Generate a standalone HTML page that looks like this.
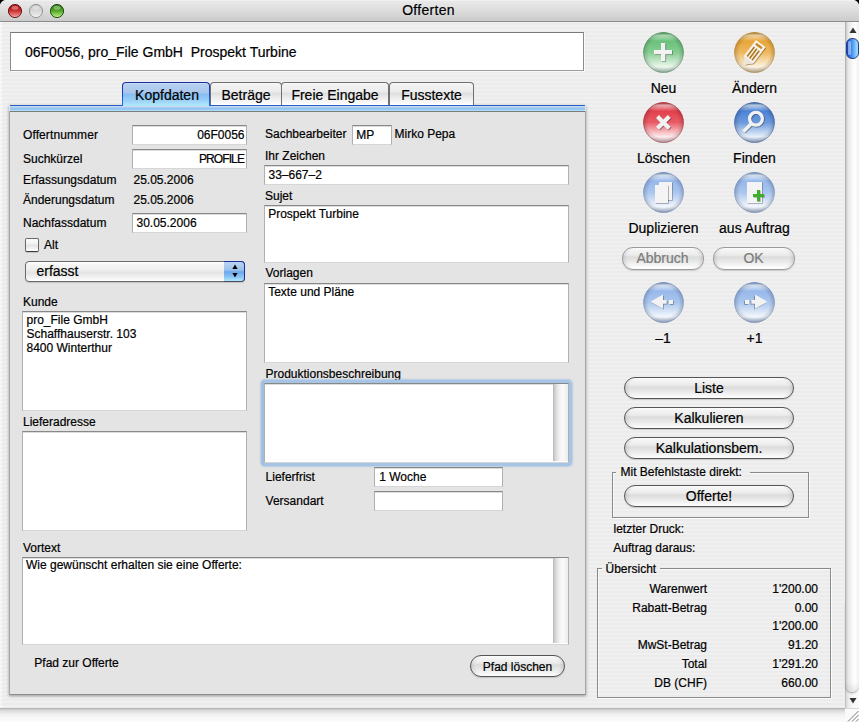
<!DOCTYPE html><html><head><meta charset="utf-8"><title>Offerten</title><style>
*{margin:0;padding:0;box-sizing:content-box}
html,body{width:859px;height:722px;overflow:hidden;background:#ececec}
body{position:relative;font-family:"Liberation Sans",sans-serif;color:#000}
.t{position:absolute;white-space:pre;-webkit-text-stroke:0.2px currentColor}
.fld{position:absolute;background:#fff;border:1px solid #b0b0b0;border-top-color:#888888;border-bottom-color:#d6d6d6;box-shadow:inset 0 1px 0 #dcdcdc}
.btn{position:absolute;border:1px solid #555;border-radius:11px;
 background:linear-gradient(#ffffff 0px,#f4f4f4 2px,#ececec 7px,#dcdcdc 9px,#e4e4e4 12px,#f4f4f4 17px,#ffffff 20px);
 box-shadow:0 1px 1px rgba(0,0,0,.15), inset 4px 0 4px -3px rgba(0,0,0,.14), inset -4px 0 4px -3px rgba(0,0,0,.14)}
.btn.dis{border-color:#9a9a9a}
</style></head><body>
<div style="position:absolute;left:0px;top:0px;width:859px;height:21px;background:linear-gradient(#f8f8f8 0,#e9e9e9 1px,#dedede 10px,#cbcbcb 21px)"></div>
<div style="position:absolute;left:0px;top:21px;width:859px;height:1px;background:#8c8c8c"></div>
<div class="t" style="left:228.5px;width:400px;top:3.15px;font-size:14px;line-height:14px;color:#000;text-align:center;letter-spacing:0.3px">Offerten</div>
<svg style="position:absolute;left:8px;top:4px" width="14" height="14" viewBox="0 0 14 14"><defs><linearGradient id="lg15" x1="0" y1="0" x2="0" y2="1"><stop offset="0" stop-color="#a80c0c"/><stop offset="0.45" stop-color="#c82a2a"/><stop offset="1" stop-color="#f6a8a8"/></linearGradient></defs><circle cx="7" cy="7" r="6.6" fill="url(#lg15)" stroke="#5a1010" stroke-width="0.9"/><ellipse cx="7" cy="3.8" rx="3.4" ry="2" fill="#fff" opacity="0.35"/></svg>
<svg style="position:absolute;left:29px;top:4px" width="14" height="14" viewBox="0 0 14 14"><defs><linearGradient id="lg36" x1="0" y1="0" x2="0" y2="1"><stop offset="0" stop-color="#c4c4c4"/><stop offset="0.45" stop-color="#d4d4d4"/><stop offset="1" stop-color="#f2f2f2"/></linearGradient></defs><circle cx="7" cy="7" r="6.6" fill="url(#lg36)" stroke="#8c8c8c" stroke-width="0.9"/><ellipse cx="7" cy="3.8" rx="3.4" ry="2" fill="#fff" opacity="0.35"/></svg>
<svg style="position:absolute;left:50px;top:4px" width="14" height="14" viewBox="0 0 14 14"><defs><linearGradient id="lg57" x1="0" y1="0" x2="0" y2="1"><stop offset="0" stop-color="#2a7a0c"/><stop offset="0.45" stop-color="#4aa020"/><stop offset="1" stop-color="#c0f488"/></linearGradient></defs><circle cx="7" cy="7" r="6.6" fill="url(#lg57)" stroke="#183c0c" stroke-width="0.9"/><ellipse cx="7" cy="3.8" rx="3.4" ry="2" fill="#fff" opacity="0.35"/></svg>
<div style="position:absolute;left:0px;top:22px;width:845px;height:686px;background:repeating-linear-gradient(#f0f0f0 0px,#f0f0f0 1px,#ebebeb 1px,#ebebeb 2px,#ececec 2px,#ececec 3px,#f0f0f0 3px,#f0f0f0 4px) 0 22px / 100% 4px fixed"></div>
<div style="position:absolute;left:0px;top:22px;width:2px;height:686px;background:repeating-linear-gradient(#ffffff 0px,#ffffff 1px,#f2f2f2 1px,#f2f2f2 4px)"></div>
<div style="position:absolute;left:10px;top:32px;width:572px;height:37px;background:#fff;border:1px solid #8c8c8c;border-top-color:#7a7a7a;border-bottom-color:#9c9c9c;box-shadow:1px 1px 0 rgba(255,255,255,.7)"></div>
<div class="t" style="left:25px;top:45.15px;font-size:14px;line-height:14px;color:#000;">06F0056, pro_File GmbH  Prospekt Turbine</div>
<div style="position:absolute;left:9px;top:105px;width:577px;height:590px;background:#e4e4e4;box-shadow:0 1px 3px rgba(0,0,0,.35)"></div>
<div style="position:absolute;left:9px;top:111px;width:1px;height:584px;background:#a6a6a6"></div>
<div style="position:absolute;left:585px;top:111px;width:1px;height:584px;background:#a6a6a6"></div>
<div style="position:absolute;left:9px;top:694px;width:577px;height:1px;background:#8e8e8e"></div>
<div style="position:absolute;left:10px;top:111px;width:575px;height:1px;background:#7c7c7c"></div>
<div style="position:absolute;left:10px;top:105px;width:575px;height:6px;background:linear-gradient(#2a5fc4 0,#2a5fc4 1px,#c9dcf3 1px,#bcd4f1 2px,#9cc4ef 3px,#8ec2f2 4px,#b6e6fc 6px)"></div>
<div style="position:absolute;left:210px;top:82px;width:70px;height:22px;border:1px solid #707070;border-bottom:none;border-radius:4px 4px 0 0;background:linear-gradient(#fafafa 0,#f2f2f2 2px,#ececec 9px,#dedede 10px,#f0f0f0 16px,#ffffff 22px)"></div>
<div class="t" style="left:46.0px;width:400px;top:88.15px;font-size:14px;line-height:14px;color:#000;text-align:center;">Beträge</div>
<div style="position:absolute;left:281px;top:82px;width:106px;height:22px;border:1px solid #707070;border-bottom:none;border-radius:4px 4px 0 0;background:linear-gradient(#fafafa 0,#f2f2f2 2px,#ececec 9px,#dedede 10px,#f0f0f0 16px,#ffffff 22px)"></div>
<div class="t" style="left:135.0px;width:400px;top:88.15px;font-size:14px;line-height:14px;color:#000;text-align:center;">Freie Eingabe</div>
<div style="position:absolute;left:389px;top:82px;width:83px;height:22px;border:1px solid #707070;border-bottom:none;border-radius:4px 4px 0 0;background:linear-gradient(#fafafa 0,#f2f2f2 2px,#ececec 9px,#dedede 10px,#f0f0f0 16px,#ffffff 22px)"></div>
<div class="t" style="left:231.5px;width:400px;top:88.15px;font-size:14px;line-height:14px;color:#000;text-align:center;">Fusstexte</div>
<div style="position:absolute;left:122px;top:82px;width:88px;height:23px;border-radius:4px 4px 0 0;background:linear-gradient(#1c2c9c 0,#1c3cb8 40%,#1a5ee0 80%,#1c78f4 100%)"></div>
<div style="position:absolute;left:123px;top:83px;width:86px;height:23px;border-radius:3px 3px 0 0;background:linear-gradient(#d8e8f8 0,#b6d0f0 1px,#a8c6ec 10px,#86bcf2 11px,#98cef6 17px,#b4eafc 23px)"></div>
<div class="t" style="left:-33.0px;width:400px;top:88.15px;font-size:14px;line-height:14px;color:#000;text-align:center;">Kopfdaten</div>
<div class="t" style="left:23px;top:128.84px;font-size:12px;line-height:12px;color:#000;letter-spacing:0.1px">Offertnummer</div>
<div class="fld" style="left:132px;top:125px;width:113px;height:18px"></div>
<div class="t" style="right:614.5px;top:128.84px;font-size:12px;line-height:12px;color:#000;text-align:right;">06F0056</div>
<div class="t" style="left:23px;top:152.84px;font-size:12px;line-height:12px;color:#000;">Suchkürzel</div>
<div class="fld" style="left:132px;top:149px;width:113px;height:18px"></div>
<div class="t" style="right:615px;top:152.84px;font-size:12px;line-height:12px;color:#000;text-align:right;letter-spacing:-0.9px">PROFILE</div>
<div class="t" style="left:23px;top:173.84px;font-size:12px;line-height:12px;color:#000;">Erfassungsdatum</div>
<div class="t" style="left:133.5px;top:173.84px;font-size:12px;line-height:12px;color:#000;">25.05.2006</div>
<div class="t" style="left:23px;top:193.84px;font-size:12px;line-height:12px;color:#000;">Änderungsdatum</div>
<div class="t" style="left:133.5px;top:193.84px;font-size:12px;line-height:12px;color:#000;">25.05.2006</div>
<div class="t" style="left:23px;top:216.84px;font-size:12px;line-height:12px;color:#000;">Nachfassdatum</div>
<div class="fld" style="left:132px;top:213px;width:113px;height:18px"></div>
<div class="t" style="left:136.5px;top:216.84px;font-size:12px;line-height:12px;color:#000;">30.05.2006</div>
<div style="position:absolute;left:25px;top:238px;width:12px;height:12px;border:1px solid #6a6a6a;border-bottom-color:#3a3a3a;border-radius:2px;background:linear-gradient(#fdfdfd,#f0f0f0 45%,#e2e2e2 50%,#f6f6f6 85%,#ffffff);box-shadow:0 1px 1px rgba(0,0,0,.15)"></div>
<div class="t" style="left:44px;top:238.84px;font-size:12px;line-height:12px;color:#000;">Alt</div>
<div style="position:absolute;left:25px;top:261px;width:218px;height:19px;border:1px solid #6a6a6a;border-radius:4px;background:linear-gradient(#ffffff 0,#f4f4f4 3px,#ececec 9px,#e2e2e2 10px,#f0f0f0 15px,#ffffff 19px);box-shadow:0 1px 1px rgba(0,0,0,.15)"></div>
<div style="position:absolute;left:224px;top:261px;width:20px;height:19px;border:1px solid #1a2f9c;border-bottom-color:#4a4a60;border-left:none;border-radius:0 4px 4px 0;background:linear-gradient(#bcd4f2 0,#9cc0ec 8px,#6aa8ee 10px,#8cc4f4 15px,#b0eafc 19px)"></div>
<svg style="position:absolute;left:232px;top:264px" width="6" height="14" viewBox="0 0 6 14"><path d="M3 0.6 L5.6 5 L0.4 5 Z" fill="#000"/><path d="M0.4 9 L5.6 9 L3 13.4 Z" fill="#000"/></svg>
<div class="t" style="left:36.5px;top:264.15px;font-size:14px;line-height:14px;color:#000;">erfasst</div>
<div class="t" style="left:23px;top:295.84px;font-size:12px;line-height:12px;color:#000;">Kunde</div>
<div class="fld" style="left:22px;top:311px;width:223px;height:98px"></div>
<div class="t" style="left:26.5px;top:313.84px;font-size:12px;line-height:12px;color:#000;">pro_File GmbH</div>
<div class="t" style="left:26.5px;top:327.84px;font-size:12px;line-height:12px;color:#000;">Schaffhauserstr. 103</div>
<div class="t" style="left:26.5px;top:341.84px;font-size:12px;line-height:12px;color:#000;">8400 Winterthur</div>
<div class="t" style="left:23px;top:415.84px;font-size:12px;line-height:12px;color:#000;">Lieferadresse</div>
<div class="fld" style="left:22px;top:431px;width:223px;height:98px"></div>
<div class="t" style="left:23px;top:541.84px;font-size:12px;line-height:12px;color:#000;">Vortext</div>
<div class="fld" style="left:22px;top:557px;width:545px;height:86px"></div>
<div style="position:absolute;left:553px;top:558px;width:15px;height:85px;background:linear-gradient(90deg,#b8b8b8 0,#dcdcdc 3px,#f4f4f4 7px,#fafafa 10px,#ececec 15px)"></div>
<div class="t" style="left:26px;top:558.84px;font-size:12px;line-height:12px;color:#000;">Wie gewünscht erhalten sie eine Offerte:</div>
<div class="t" style="left:34.3px;top:656.84px;font-size:12px;line-height:12px;color:#000;">Pfad zur Offerte</div>
<div class="btn" style="left:470px;top:655px;width:93px;height:20px"></div>
<div class="t" style="left:317.5px;width:400px;top:660.84px;font-size:12px;line-height:12px;color:#000;text-align:center;">Pfad löschen</div>
<div class="t" style="left:265px;top:127.84px;font-size:12px;line-height:12px;color:#000;">Sachbearbeiter</div>
<div class="fld" style="left:352px;top:125px;width:38px;height:18px"></div>
<div class="t" style="left:356.3px;top:128.84px;font-size:12px;line-height:12px;color:#000;">MP</div>
<div class="t" style="left:394.5px;top:127.84px;font-size:12px;line-height:12px;color:#000;">Mirko Pepa</div>
<div class="t" style="left:265px;top:149.84px;font-size:12px;line-height:12px;color:#000;">Ihr Zeichen</div>
<div class="fld" style="left:264px;top:165px;width:303px;height:18px"></div>
<div class="t" style="left:268.5px;top:168.84px;font-size:12px;line-height:12px;color:#000;">33–667–2</div>
<div class="t" style="left:265px;top:189.84px;font-size:12px;line-height:12px;color:#000;">Sujet</div>
<div class="fld" style="left:264px;top:205px;width:303px;height:56px"></div>
<div class="t" style="left:268.2px;top:207.84px;font-size:12px;line-height:12px;color:#000;">Prospekt Turbine</div>
<div class="t" style="left:265.5px;top:266.84px;font-size:12px;line-height:12px;color:#000;">Vorlagen</div>
<div class="fld" style="left:264px;top:283px;width:303px;height:78px"></div>
<div class="t" style="left:268.2px;top:285.84px;font-size:12px;line-height:12px;color:#000;">Texte und Pläne</div>
<div class="t" style="left:265.5px;top:367.84px;font-size:12px;line-height:12px;color:#000;">Produktionsbeschreibung</div>
<div style="position:absolute;left:261px;top:380px;width:311px;height:86px;border-radius:4px;box-shadow:0 0 1.5px 1px rgba(150,185,225,.55);background:linear-gradient(90deg,#b4cce6 0,#96bae0 1.5px,#a6c4e4 3px)"></div>
<div class="fld" style="left:264px;top:383px;width:303px;height:78px"></div>
<div style="position:absolute;left:553px;top:384px;width:15px;height:77px;background:linear-gradient(90deg,#b8b8b8 0,#dcdcdc 3px,#f4f4f4 7px,#fafafa 10px,#ececec 15px)"></div>
<div class="t" style="left:265.6px;top:470.84px;font-size:12px;line-height:12px;color:#000;">Lieferfrist</div>
<div class="fld" style="left:374px;top:467px;width:127px;height:18px"></div>
<div class="t" style="left:379.2px;top:470.84px;font-size:12px;line-height:12px;color:#000;">1 Woche</div>
<div class="t" style="left:265.6px;top:494.84px;font-size:12px;line-height:12px;color:#000;">Versandart</div>
<div class="fld" style="left:374px;top:491px;width:127px;height:18px"></div>
<svg style="position:absolute;left:643px;top:32px" width="41" height="41" viewBox="0 0 41 41"><defs><linearGradient id="ig1" x1="0" y1="0" x2="0" y2="1"><stop offset="0" stop-color="#3f9550"/><stop offset="0.07" stop-color="#b8e4bf"/><stop offset="0.22" stop-color="#6cc17c"/><stop offset="0.5" stop-color="#86cc92"/><stop offset="0.85" stop-color="#eaf8ec"/><stop offset="1" stop-color="#aec4bc"/></linearGradient><radialGradient id="ir1" cx="50%" cy="50%" r="50%"><stop offset="0.75" stop-color="#000" stop-opacity="0"/><stop offset="1" stop-color="#000" stop-opacity="0.18"/></radialGradient></defs><circle cx="20.5" cy="20.5" r="20.2" fill="url(#ig1)"/><circle cx="20.5" cy="20.5" r="20.2" fill="url(#ir1)"/><circle cx="20.5" cy="20.5" r="19.9" fill="none" stroke="#3f9550" stroke-opacity="0.55" stroke-width="0.8"/><g transform="translate(0.8,0.8)" opacity="0.35"><path d="M18 11 H22.3 V18 H29 V22.2 H22.3 V29.2 H18 V22.2 H11 V18 H18 Z" fill="#000"/></g><path d="M18 11 H22.3 V18 H29 V22.2 H22.3 V29.2 H18 V22.2 H11 V18 H18 Z" fill="#f2f2f2"/></svg>
<svg style="position:absolute;left:734px;top:32px" width="41" height="41" viewBox="0 0 41 41"><defs><linearGradient id="ig2" x1="0" y1="0" x2="0" y2="1"><stop offset="0" stop-color="#bf861e"/><stop offset="0.07" stop-color="#f6ddb0"/><stop offset="0.22" stop-color="#e8a63a"/><stop offset="0.5" stop-color="#eeb85e"/><stop offset="0.85" stop-color="#fdf3e0"/><stop offset="1" stop-color="#c8baa4"/></linearGradient><radialGradient id="ir2" cx="50%" cy="50%" r="50%"><stop offset="0.75" stop-color="#000" stop-opacity="0"/><stop offset="1" stop-color="#000" stop-opacity="0.18"/></radialGradient></defs><circle cx="20.5" cy="20.5" r="20.2" fill="url(#ig2)"/><circle cx="20.5" cy="20.5" r="20.2" fill="url(#ir2)"/><circle cx="20.5" cy="20.5" r="19.9" fill="none" stroke="#bf861e" stroke-opacity="0.55" stroke-width="0.8"/><g transform="translate(18.9,22) rotate(37)"><g transform="translate(1.1,0.5)" opacity="0.45"><path d="M-6 -13 H6 V7 L0 13.2 L-6 7 Z" fill="#5a3a08"/></g><path d="M-6 -13 H6 V7 L0 13.2 L-6 7 Z" fill="#f7f4ee"/><rect x="-3.9" y="-6.5" width="1.7" height="12" fill="#b27820"/><rect x="-0.85" y="-6.5" width="1.7" height="12" fill="#b27820"/><rect x="2.2" y="-6.5" width="1.7" height="12" fill="#b27820"/><rect x="-4" y="-11.2" width="8" height="2.4" rx="1" fill="#c88a2a"/><path d="M-6 7 H6 L0 13.2 Z" fill="#ebe5d8"/></g></svg>
<div class="t" style="left:463.5px;width:400px;top:81.15px;font-size:14px;line-height:14px;color:#000;text-align:center;">Neu</div>
<div class="t" style="left:554.5px;width:400px;top:81.15px;font-size:14px;line-height:14px;color:#000;text-align:center;">Ändern</div>
<svg style="position:absolute;left:643px;top:102px" width="41" height="41" viewBox="0 0 41 41"><defs><linearGradient id="ig3" x1="0" y1="0" x2="0" y2="1"><stop offset="0" stop-color="#b51c2a"/><stop offset="0.07" stop-color="#f4babe"/><stop offset="0.22" stop-color="#e2404c"/><stop offset="0.5" stop-color="#e85c66"/><stop offset="0.85" stop-color="#feeaec"/><stop offset="1" stop-color="#c8b0b8"/></linearGradient><radialGradient id="ir3" cx="50%" cy="50%" r="50%"><stop offset="0.75" stop-color="#000" stop-opacity="0"/><stop offset="1" stop-color="#000" stop-opacity="0.18"/></radialGradient></defs><circle cx="20.5" cy="20.5" r="20.2" fill="url(#ig3)"/><circle cx="20.5" cy="20.5" r="20.2" fill="url(#ir3)"/><circle cx="20.5" cy="20.5" r="19.9" fill="none" stroke="#b51c2a" stroke-opacity="0.55" stroke-width="0.8"/><g transform="translate(0.8,0.8)" opacity="0.35"><path d="M13 16 L16 13 L20.4 17.4 L24.8 13 L27.8 16 L23.4 20.4 L27.8 24.8 L24.8 27.8 L20.4 23.4 L16 27.8 L13 24.8 L17.4 20.4 Z" fill="#000"/></g><path d="M13 16 L16 13 L20.4 17.4 L24.8 13 L27.8 16 L23.4 20.4 L27.8 24.8 L24.8 27.8 L20.4 23.4 L16 27.8 L13 24.8 L17.4 20.4 Z" fill="#f2f2f2"/></svg>
<svg style="position:absolute;left:734px;top:102px" width="41" height="41" viewBox="0 0 41 41"><defs><linearGradient id="ig4" x1="0" y1="0" x2="0" y2="1"><stop offset="0" stop-color="#2a5aa8"/><stop offset="0.07" stop-color="#c8dbf3"/><stop offset="0.22" stop-color="#4c82d6"/><stop offset="0.5" stop-color="#6c9adc"/><stop offset="0.85" stop-color="#e6f0fb"/><stop offset="1" stop-color="#9aaac8"/></linearGradient><radialGradient id="ir4" cx="50%" cy="50%" r="50%"><stop offset="0.75" stop-color="#000" stop-opacity="0"/><stop offset="1" stop-color="#000" stop-opacity="0.18"/></radialGradient></defs><circle cx="20.5" cy="20.5" r="20.2" fill="url(#ig4)"/><circle cx="20.5" cy="20.5" r="20.2" fill="url(#ir4)"/><circle cx="20.5" cy="20.5" r="19.9" fill="none" stroke="#2a5aa8" stroke-opacity="0.55" stroke-width="0.8"/><g transform="translate(0.8,0.8)" opacity="0.35"><circle cx="22" cy="16.8" r="6.4" fill="none" stroke="#000" stroke-width="3.3"/><path d="M17.5 21.5 L9.5 29.5" stroke="#000" stroke-width="3.4" stroke-linecap="butt"/></g><circle cx="22" cy="16.8" r="6.4" fill="none" stroke="#f2f2f2" stroke-width="3.3"/><path d="M17.5 21.5 L9.5 29.5" stroke="#f2f2f2" stroke-width="3.4" stroke-linecap="butt"/></svg>
<div class="t" style="left:463.5px;width:400px;top:151.15px;font-size:14px;line-height:14px;color:#000;text-align:center;">Löschen</div>
<div class="t" style="left:554.5px;width:400px;top:151.15px;font-size:14px;line-height:14px;color:#000;text-align:center;">Finden</div>
<svg style="position:absolute;left:643px;top:172px" width="41" height="41" viewBox="0 0 41 41"><defs><linearGradient id="ig5" x1="0" y1="0" x2="0" y2="1"><stop offset="0" stop-color="#6a8cc8"/><stop offset="0.07" stop-color="#e4eefb"/><stop offset="0.22" stop-color="#98b8ea"/><stop offset="0.5" stop-color="#aac6ee"/><stop offset="0.85" stop-color="#f2f7fd"/><stop offset="1" stop-color="#a6b4d0"/></linearGradient><radialGradient id="ir5" cx="50%" cy="50%" r="50%"><stop offset="0.75" stop-color="#000" stop-opacity="0"/><stop offset="1" stop-color="#000" stop-opacity="0.18"/></radialGradient></defs><circle cx="20.5" cy="20.5" r="20.2" fill="url(#ig5)"/><circle cx="20.5" cy="20.5" r="20.2" fill="url(#ir5)"/><circle cx="20.5" cy="20.5" r="19.9" fill="none" stroke="#6a8cc8" stroke-opacity="0.55" stroke-width="0.8"/><rect x="16.8" y="10.8" width="13" height="18" fill="#000" opacity="0.3"/><rect x="16" y="10" width="13" height="18" fill="#f4f4f4"/><rect x="12.8" y="13.8" width="13" height="18" fill="#000" opacity="0.35"/><rect x="12" y="13" width="13" height="18" fill="#f4f4f4"/></svg>
<svg style="position:absolute;left:734px;top:172px" width="41" height="41" viewBox="0 0 41 41"><defs><linearGradient id="ig6" x1="0" y1="0" x2="0" y2="1"><stop offset="0" stop-color="#6a8cc8"/><stop offset="0.07" stop-color="#e4eefb"/><stop offset="0.22" stop-color="#98b8ea"/><stop offset="0.5" stop-color="#aac6ee"/><stop offset="0.85" stop-color="#f2f7fd"/><stop offset="1" stop-color="#a6b4d0"/></linearGradient><radialGradient id="ir6" cx="50%" cy="50%" r="50%"><stop offset="0.75" stop-color="#000" stop-opacity="0"/><stop offset="1" stop-color="#000" stop-opacity="0.18"/></radialGradient></defs><circle cx="20.5" cy="20.5" r="20.2" fill="url(#ig6)"/><circle cx="20.5" cy="20.5" r="20.2" fill="url(#ir6)"/><circle cx="20.5" cy="20.5" r="19.9" fill="none" stroke="#6a8cc8" stroke-opacity="0.55" stroke-width="0.8"/><rect x="13.8" y="10.8" width="15" height="21" fill="#000" opacity="0.3"/><rect x="13" y="10" width="15" height="21" fill="#f4f4f4"/><path d="M23 18 H26 V22 H30 V25.1 H26 V29.2 H23 V25.1 H19 V22 H23 Z" fill="#000" opacity="0.3" transform="translate(0.7,0.7)"/><path d="M23 18 H26 V22 H30 V25.1 H26 V29.2 H23 V25.1 H19 V22 H23 Z" fill="#3fae2e"/></svg>
<div class="t" style="left:463.5px;width:400px;top:221.15px;font-size:14px;line-height:14px;color:#000;text-align:center;">Duplizieren</div>
<div class="t" style="left:554.5px;width:400px;top:221.15px;font-size:14px;line-height:14px;color:#000;text-align:center;">aus Auftrag</div>
<div class="btn dis" style="left:622px;top:247px;width:80px;height:21px"></div>
<div class="btn dis" style="left:713px;top:247px;width:80px;height:21px"></div>
<div class="t" style="left:462.5px;width:400px;top:251.15px;font-size:14px;line-height:14px;color:#7c7c7c;text-align:center;">Abbruch</div>
<div class="t" style="left:553.5px;width:400px;top:251.15px;font-size:14px;line-height:14px;color:#7c7c7c;text-align:center;">OK</div>
<svg style="position:absolute;left:643px;top:282px" width="41" height="41" viewBox="0 0 41 41"><defs><linearGradient id="ig7" x1="0" y1="0" x2="0" y2="1"><stop offset="0" stop-color="#6a8cc8"/><stop offset="0.07" stop-color="#e4eefb"/><stop offset="0.22" stop-color="#98b8ea"/><stop offset="0.5" stop-color="#aac6ee"/><stop offset="0.85" stop-color="#f2f7fd"/><stop offset="1" stop-color="#a6b4d0"/></linearGradient><radialGradient id="ir7" cx="50%" cy="50%" r="50%"><stop offset="0.75" stop-color="#000" stop-opacity="0"/><stop offset="1" stop-color="#000" stop-opacity="0.18"/></radialGradient></defs><circle cx="20.5" cy="20.5" r="20.2" fill="url(#ig7)"/><circle cx="20.5" cy="20.5" r="20.2" fill="url(#ir7)"/><circle cx="20.5" cy="20.5" r="19.9" fill="none" stroke="#6a8cc8" stroke-opacity="0.55" stroke-width="0.8"/><g transform="translate(0.8,0.8)" opacity="0.35"><path d="M7.4 19.8 L20 12.6 L20 18 L23.7 18 L23.7 21.8 L20 21.8 L20 26.8 Z" fill="#000"/><rect x="26" y="18" width="4" height="4" fill="#000"/></g><path d="M7.4 19.8 L20 12.6 L20 18 L23.7 18 L23.7 21.8 L20 21.8 L20 26.8 Z" fill="#f2f2f2"/><rect x="26" y="18" width="4" height="4" fill="#f2f2f2"/></svg>
<svg style="position:absolute;left:734px;top:282px" width="41" height="41" viewBox="0 0 41 41"><defs><linearGradient id="ig8" x1="0" y1="0" x2="0" y2="1"><stop offset="0" stop-color="#6a8cc8"/><stop offset="0.07" stop-color="#e4eefb"/><stop offset="0.22" stop-color="#98b8ea"/><stop offset="0.5" stop-color="#aac6ee"/><stop offset="0.85" stop-color="#f2f7fd"/><stop offset="1" stop-color="#a6b4d0"/></linearGradient><radialGradient id="ir8" cx="50%" cy="50%" r="50%"><stop offset="0.75" stop-color="#000" stop-opacity="0"/><stop offset="1" stop-color="#000" stop-opacity="0.18"/></radialGradient></defs><circle cx="20.5" cy="20.5" r="20.2" fill="url(#ig8)"/><circle cx="20.5" cy="20.5" r="20.2" fill="url(#ir8)"/><circle cx="20.5" cy="20.5" r="19.9" fill="none" stroke="#6a8cc8" stroke-opacity="0.55" stroke-width="0.8"/><g transform="translate(41,0) scale(-1,1)"><g transform="translate(0.8,0.8)" opacity="0.35"><path d="M7.4 19.8 L20 12.6 L20 18 L23.7 18 L23.7 21.8 L20 21.8 L20 26.8 Z" fill="#000"/><rect x="26" y="18" width="4" height="4" fill="#000"/></g><path d="M7.4 19.8 L20 12.6 L20 18 L23.7 18 L23.7 21.8 L20 21.8 L20 26.8 Z" fill="#f2f2f2"/><rect x="26" y="18" width="4" height="4" fill="#f2f2f2"/></g></svg>
<div class="t" style="left:463px;width:400px;top:331.15px;font-size:14px;line-height:14px;color:#000;text-align:center;">–1</div>
<div class="t" style="left:554.5px;width:400px;top:331.15px;font-size:14px;line-height:14px;color:#000;text-align:center;">+1</div>
<div class="btn" style="left:624px;top:377px;width:168px;height:20px"></div>
<div class="t" style="left:509px;width:400px;top:381.15px;font-size:14px;line-height:14px;color:#000;text-align:center;">Liste</div>
<div class="btn" style="left:624px;top:407px;width:168px;height:20px"></div>
<div class="t" style="left:509px;width:400px;top:411.15px;font-size:14px;line-height:14px;color:#000;text-align:center;">Kalkulieren</div>
<div class="btn" style="left:624px;top:437px;width:168px;height:20px"></div>
<div class="t" style="left:509px;width:400px;top:441.15px;font-size:14px;line-height:14px;color:#000;text-align:center;">Kalkulationsbem.</div>
<div style="position:absolute;left:612px;top:472px;width:195px;height:44px;border:1px solid #8a8a8a;box-shadow:1px 1px 0 rgba(255,255,255,.8), inset 1px 1px 0 rgba(255,255,255,.6)"></div>
<div style="position:absolute;left:616px;top:468px;width:134px;height:8px;background:repeating-linear-gradient(#f0f0f0 0px,#f0f0f0 1px,#ebebeb 1px,#ebebeb 2px,#ececec 2px,#ececec 3px,#f0f0f0 3px,#f0f0f0 4px) 0 22px / 100% 4px fixed"></div>
<div class="t" style="left:620.5px;top:465.84px;font-size:12px;line-height:12px;color:#000;">Mit Befehlstaste direkt:</div>
<div class="btn" style="left:624px;top:485px;width:168px;height:20px"></div>
<div class="t" style="left:509px;width:400px;top:489.15px;font-size:14px;line-height:14px;color:#000;text-align:center;">Offerte!</div>
<div class="t" style="left:613.5px;top:522.84px;font-size:12px;line-height:12px;color:#000;">letzter Druck:</div>
<div class="t" style="left:613.3px;top:541.84px;font-size:12px;line-height:12px;color:#000;">Auftrag daraus:</div>
<div style="position:absolute;left:597px;top:568px;width:232px;height:128px;border:1px solid #8a8a8a;box-shadow:1px 1px 0 rgba(255,255,255,.8), inset 1px 1px 0 rgba(255,255,255,.6)"></div>
<div style="position:absolute;left:602px;top:564px;width:58px;height:8px;background:repeating-linear-gradient(#f0f0f0 0px,#f0f0f0 1px,#ebebeb 1px,#ebebeb 2px,#ececec 2px,#ececec 3px,#f0f0f0 3px,#f0f0f0 4px) 0 22px / 100% 4px fixed"></div>
<div class="t" style="left:605.5px;top:562.84px;font-size:12px;line-height:12px;color:#000;">Übersicht</div>
<div class="t" style="right:152px;top:582.84px;font-size:12px;line-height:12px;color:#000;text-align:right;">Warenwert</div>
<div class="t" style="right:41px;top:582.84px;font-size:12px;line-height:12px;color:#000;text-align:right;">1'200.00</div>
<div class="t" style="right:152px;top:601.84px;font-size:12px;line-height:12px;color:#000;text-align:right;">Rabatt-Betrag</div>
<div class="t" style="right:41px;top:601.84px;font-size:12px;line-height:12px;color:#000;text-align:right;">0.00</div>
<div class="t" style="right:41px;top:619.84px;font-size:12px;line-height:12px;color:#000;text-align:right;">1'200.00</div>
<div class="t" style="right:152px;top:638.84px;font-size:12px;line-height:12px;color:#000;text-align:right;">MwSt-Betrag</div>
<div class="t" style="right:41px;top:638.84px;font-size:12px;line-height:12px;color:#000;text-align:right;">91.20</div>
<div class="t" style="right:152px;top:657.84px;font-size:12px;line-height:12px;color:#000;text-align:right;">Total</div>
<div class="t" style="right:41px;top:657.84px;font-size:12px;line-height:12px;color:#000;text-align:right;">1'291.20</div>
<div class="t" style="right:152px;top:676.84px;font-size:12px;line-height:12px;color:#000;text-align:right;">DB (CHF)</div>
<div class="t" style="right:41px;top:676.84px;font-size:12px;line-height:12px;color:#000;text-align:right;">660.00</div>
<div style="position:absolute;left:845px;top:22px;width:14px;height:686px;background:linear-gradient(90deg,#9c9c9c 0,#c8c8c8 1px,#e6e6e6 3px,#f6f6f6 7px,#ffffff 10px,#f0f0f0 14px)"></div>
<svg style="position:absolute;left:849px;top:27px" width="8" height="7" viewBox="0 0 8 7"><path d="M4 0.5 L7.5 6 L0.5 6 Z" fill="#333"/></svg>
<div style="position:absolute;left:846px;top:38px;width:11px;height:19px;border:1px solid #2a3f7a;border-radius:6px;background:linear-gradient(90deg,#0c3cc4 0,#2466e0 2px,#4a92ee 5px,#88ccff 9px,#a0dcff 11px)"></div>
<div style="position:absolute;left:848px;top:41px;width:3px;height:14px;border-radius:2px;background:rgba(255,255,255,.45)"></div>
<div style="position:absolute;left:845px;top:688px;width:14px;height:20px;background:linear-gradient(90deg,#a8a8a8 0,#d8d8d8 1px,#efefef 4px,#f8f8f8 8px,#fbfbfb 14px)"></div>
<div style="position:absolute;left:845px;top:600px;width:14px;height:92px;border-radius:0 0 7px 7px;background:linear-gradient(90deg,#9c9c9c 0,#c8c8c8 1px,#e6e6e6 3px,#f6f6f6 7px,#ffffff 10px,#f0f0f0 14px);box-shadow:0 1px 0 rgba(0,0,0,.18),0 2px 2px rgba(0,0,0,.12)"></div>
<div style="position:absolute;left:845px;top:672px;width:14px;height:20px;border-radius:0 0 7px 7px;background:linear-gradient(rgba(0,0,0,0) 0,rgba(0,0,0,0) 50%,rgba(0,0,0,.08) 100%)"></div>
<svg style="position:absolute;left:849px;top:697px" width="8" height="7" viewBox="0 0 8 7"><path d="M0.5 1 L7.5 1 L4 6.5 Z" fill="#333"/></svg>
<div style="position:absolute;left:0px;top:708px;width:845px;height:14px;background:linear-gradient(#a4a4a4 0,#c6c6c6 1px,#dedede 3px,#efefef 6px,#f8f8f8 10px,#fbfbfb 14px)"></div>
<div style="position:absolute;left:845px;top:708px;width:14px;height:14px;background:#fafafa;border-top:1px solid #d8d8d8;box-sizing:border-box"></div>
<svg style="position:absolute;left:845px;top:708px" width="14" height="14" viewBox="0 0 14 14"><path d="M3 13.5 L13.5 3 M7 13.5 L13.5 7 M11 13.5 L13.5 11" stroke="#7a7a7a" stroke-width="1"/></svg>
<svg style="position:absolute;left:0;top:0" width="6" height="6" viewBox="0 0 6 6"><path d="M0 0 H5 Q1.5 0.6 0 4.5 Z" fill="#000"/></svg>
<svg style="position:absolute;left:853px;top:0" width="6" height="6" viewBox="0 0 6 6"><path d="M6 0 H1 Q4.5 0.6 6 4.5 Z" fill="#000"/></svg>
</body></html>
